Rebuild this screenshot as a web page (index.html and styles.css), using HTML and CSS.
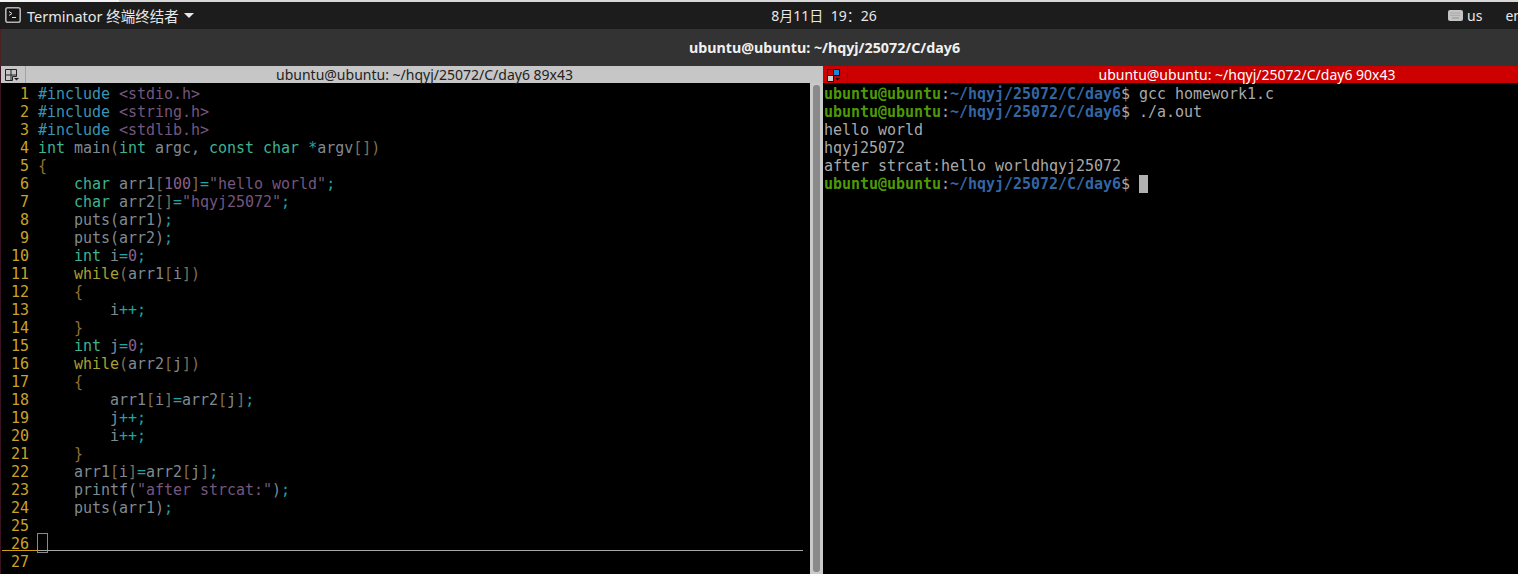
FILE: index.html
```html
<!DOCTYPE html>
<html lang="zh">
<head>
<meta charset="utf-8">
<title>Terminator</title>
<link rel="stylesheet" href="styles.css">
</head>
<body>
<div class="edge"><div class="edge-left"></div><div class="edge-right"></div></div>
<header class="topbar">
  <div class="app">
    <svg class="app-icon" width="16" height="16" viewBox="0 0 16 16"><rect x=".8" y=".8" width="14.400" height="14.400" rx="2" fill="#161616" stroke="#b4b4b4" stroke-width="1.600"/><path d="M4 4.500l3 2-3 2" fill="none" stroke="#e0e0e0" stroke-width="1"/><path d="M7 10.500h4" stroke="#e0e0e0"/></svg>
    <span class="app-name">Terminator 终端终结者</span>
    <span class="caret"></span>
  </div>
  <div class="clock">8月11日&nbsp;&nbsp;19：26</div>
  <div class="tray">
    <svg width="15" height="11" viewBox="0 0 15 11"><rect width="15" height="11" rx="2" fill="#c4c4c4"/><path d="M2.500 3h10M2.500 5.300h10" stroke="#8e8e8e" stroke-dasharray="1 1"/><path d="M4 8h7" stroke="#8e8e8e"/></svg>
    <span class="us">us</span>
    <span class="en">en</span>
  </div>
</header>
<div class="titlebar">ubuntu@ubuntu: ~/hqyj/25072/C/day6</div>
<main class="panes">
  <section class="pane pane-left">
    <div class="pane-head">
      <span class="grip"><svg width="15" height="14" viewBox="0 0 15 14"><path d="M.5 .5h11v7h-4v4h-7zM6 .5v11M.5 6h11" fill="none" stroke="#222"/><path d="M9 9h5l-2.500 2.500z" fill="#222"/></svg></span>
      <span class="pane-title">ubuntu@ubuntu: ~/hqyj/25072/C/day6 89x43</span>
    </div>
    <div class="pane-body">
      <div class="term vim">
        <div class="ln"><b>1</b><span><i class="pre">#include</i> <i class="str">&lt;stdio.h&gt;</i></span></div>
        <div class="ln"><b>2</b><span><i class="pre">#include</i> <i class="str">&lt;string.h&gt;</i></span></div>
        <div class="ln"><b>3</b><span><i class="pre">#include</i> <i class="str">&lt;stdlib.h&gt;</i></span></div>
        <div class="ln"><b>4</b><span><i class="ty">int</i> main<i class="par">(</i><i class="ty">int</i> argc, <i class="ty">const</i> <i class="ty">char</i> <i class="op">*</i>argv<i class="par">[])</i></span></div>
        <div class="ln"><b>5</b><span><i class="br">{</i></span></div>
        <div class="ln"><b>6</b><span>    <i class="ty">char</i> arr1<i class="par">[</i><i class="num">100</i><i class="par">]</i><i class="op">=</i><i class="str">"hello world"</i><i class="op">;</i></span></div>
        <div class="ln"><b>7</b><span>    <i class="ty">char</i> arr2<i class="par">[]</i><i class="op">=</i><i class="str">"hqyj25072"</i><i class="op">;</i></span></div>
        <div class="ln"><b>8</b><span>    puts(arr1)<i class="op">;</i></span></div>
        <div class="ln"><b>9</b><span>    puts(arr2)<i class="op">;</i></span></div>
        <div class="ln"><b>10</b><span>    <i class="ty">int</i> i<i class="op">=</i><i class="num">0</i><i class="op">;</i></span></div>
        <div class="ln"><b>11</b><span>    <i class="kw">while</i><i class="par">(</i>arr1<i class="par">[</i>i<i class="par">])</i></span></div>
        <div class="ln"><b>12</b><span>    <i class="br">{</i></span></div>
        <div class="ln"><b>13</b><span>        i<i class="op">++;</i></span></div>
        <div class="ln"><b>14</b><span>    <i class="br">}</i></span></div>
        <div class="ln"><b>15</b><span>    <i class="ty">int</i> j<i class="op">=</i><i class="num">0</i><i class="op">;</i></span></div>
        <div class="ln"><b>16</b><span>    <i class="kw">while</i><i class="par">(</i>arr2<i class="par">[</i>j<i class="par">])</i></span></div>
        <div class="ln"><b>17</b><span>    <i class="br">{</i></span></div>
        <div class="ln"><b>18</b><span>        arr1<i class="par">[</i>i<i class="par">]</i><i class="op">=</i>arr2<i class="par">[</i>j<i class="par">]</i><i class="op">;</i></span></div>
        <div class="ln"><b>19</b><span>        j<i class="op">++;</i></span></div>
        <div class="ln"><b>20</b><span>        i<i class="op">++;</i></span></div>
        <div class="ln"><b>21</b><span>    <i class="br">}</i></span></div>
        <div class="ln"><b>22</b><span>    arr1<i class="par">[</i>i<i class="par">]</i><i class="op">=</i>arr2<i class="par">[</i>j<i class="par">]</i><i class="op">;</i></span></div>
        <div class="ln"><b>23</b><span>    printf(<i class="str">"after strcat:"</i>)<i class="op">;</i></span></div>
        <div class="ln"><b>24</b><span>    puts(arr1)<i class="op">;</i></span></div>
        <div class="ln"><b>25</b><span></span></div>
        <div class="ln cur"><b>26</b><span><i class="box"></i></span></div>
        <div class="ln"><b>27</b><span></span></div>
      </div>
      <div class="scrollbar"><div class="thumb"></div></div>
    </div>
  </section>
  <section class="pane pane-right">
    <div class="pane-head active">
      <span class="grip"><svg width="15" height="14" viewBox="0 0 15 14"><rect x=".5" y=".5" width="6" height="6" fill="#cc0000" stroke="#111"/><rect x="6.500" y=".5" width="6" height="6" fill="#1a86d8" stroke="#111"/><rect x=".5" y="6.500" width="6" height="6" fill="#cfcfcf" stroke="#111"/><path d="M8 9h5l-2.500 2.500z" fill="#111"/></svg></span>
      <span class="pane-title">ubuntu@ubuntu: ~/hqyj/25072/C/day6 90x43</span>
    </div>
    <div class="term shell">
      <div class="sl"><i class="u">ubuntu@ubuntu</i>:<i class="p">~/hqyj/25072/C/day6</i>$ gcc homework1.c</div>
      <div class="sl"><i class="u">ubuntu@ubuntu</i>:<i class="p">~/hqyj/25072/C/day6</i>$ ./a.out</div>
      <div class="sl">hello world</div>
      <div class="sl">hqyj25072</div>
      <div class="sl">after strcat:hello worldhqyj25072</div>
      <div class="sl"><i class="u">ubuntu@ubuntu</i>:<i class="p">~/hqyj/25072/C/day6</i>$ <i class="block"></i></div>
    </div>
  </section>
</main>
</body>
</html>
```
FILE: styles.css
```css
* { box-sizing: border-box; }
html, body { margin: 0; height: 574px; overflow: hidden; background: #000; }
body { display: flex; flex-direction: column; width: 1518px; font-family: "Noto Sans", "Noto Sans CJK SC", sans-serif; }
.edge { height: 2px; display: flex; flex: none; }
.edge-left { width: 119px; background: #f4f4f4; }
.edge-right { flex: 1; background: #d8d8d8; }
.topbar { height: 27px; flex: none; background: #1c1c1c; color: #e8e8e8; display: grid; grid-template-columns: 1fr auto 1fr; align-items: center; font-size: 14px; padding-bottom: 1px; }
.app { display: flex; align-items: center; padding-left: 5px; }
.app-icon { margin-right: 6px; }
.app-name { font-size: 14.500px; }
.caret { margin-left: 5px; border: 5px solid transparent; border-top: 5px solid #e8e8e8; border-bottom: 0; }
.clock { font-size: 14px; padding-left: 130px; }
.tray { display: flex; align-items: center; justify-content: flex-end; overflow: hidden; margin-right: -4px; }
.us { margin-left: 4px; font-size: 14px; }
.en { margin-left: 23px; font-size: 14px; }
.titlebar { height: 37px; flex: none; background: #333; color: #f0f0f0; font-weight: 700; font-size: 14.250px; text-align: center; line-height: 37px; padding-left: 130px; border-left: 1px solid #4a2020; }
.panes { flex: 1; display: flex; min-height: 0; }
.pane { display: flex; flex-direction: column; min-width: 0; }
.pane-left { width: 823px; border-left: 1px solid #3a1420; }
.pane-right { flex: 1; }
.pane-head { height: 17px; flex: none; background: #c6c6c6; color: #222; display: flex; align-items: center; font-size: 14px; }
.pane-head.active { background: #cc0000; color: #fff; }
.grip { width: 25px; height: 17px; padding: 2px 0 0 4px; flex: none; border-right: 1px solid #a4a4a4; }
.active .grip { border-right-color: #b00000; }
.pane-title { flex: 1; text-align: center; white-space: nowrap; }
.active .pane-title { padding-left: 128px; }
.pane-body { flex: 1; display: flex; min-height: 0; }
.term { font-family: "DejaVu Sans Mono", "Liberation Mono", monospace; font-size: 15px; letter-spacing: -.03px; line-height: 18px; color: #a9a9a9; }
.term i { font-style: normal; }
.vim { flex: 1; padding-top: 2px; color: #7f8a92; min-width: 0; }
.ln { height: 18px; display: flex; position: relative; white-space: pre; }
.ln b { width: 28px; margin-right: 9px; text-align: right; font-weight: 400; color: #c9a227; flex: none; }
.pre { color: #3b94b4; }
.str { color: #75567e; }
.ty { color: #3fb28f; }
.kw { color: #a8a030; }
.par { color: #7e6f5a; }
.op { color: #1fa5a5; }
.num { color: #8a5f8a; }
.br { color: #94702f; }
.cur::after { content: ""; position: absolute; left: 1px; right: 7px; top: 15px; height: 1px; background: linear-gradient(to right, #d0a010 0, #d0a010 36px, #a8a8a8 36px); }
.box { display: inline-block; width: 11px; height: 20px; border: 1px solid #8a8a8a; position: absolute; left: 36px; top: -2px; }
.scrollbar { width: 13px; flex: none; background: #cacaca; padding: 2px 3px; }
.thumb { height: 100%; background: #8a8a8a; border-radius: 3px; }
.shell { flex: 1; padding: 2px 0 0 1px; }
.sl { height: 18px; white-space: pre; }
.u { color: #4e9a06; font-weight: 700; }
.p { color: #3465a4; font-weight: 700; }
.block { display: inline-block; width: 9px; height: 18px; background: #b0b0b0; vertical-align: top; }
```
